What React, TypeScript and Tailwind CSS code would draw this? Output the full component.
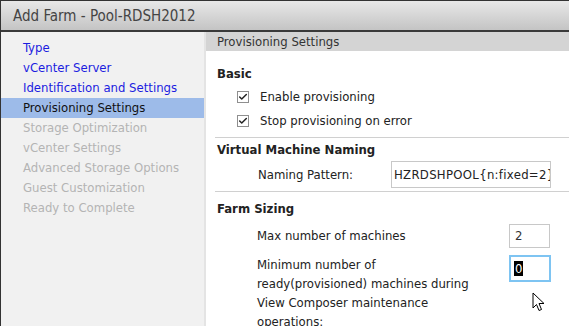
import { Check } from 'lucide-react'

const navItems = [
  { label: 'Type', state: 'link' },
  { label: 'vCenter Server', state: 'link' },
  { label: 'Identification and Settings', state: 'link' },
  { label: 'Provisioning Settings', state: 'active' },
  { label: 'Storage Optimization', state: 'disabled' },
  { label: 'vCenter Settings', state: 'disabled' },
  { label: 'Advanced Storage Options', state: 'disabled' },
  { label: 'Guest Customization', state: 'disabled' },
  { label: 'Ready to Complete', state: 'disabled' },
]

function CheckRow({ label }: { label: string }) {
  return (
    <label className="flex h-6 items-center gap-[11px] pl-[20px]">
      <span className="flex size-[12px] items-center justify-center border border-[#8f8f8f] bg-white">
        <Check className="size-[10px] text-[#222]" strokeWidth={3.5} />
      </span>
      <span>{label}</span>
    </label>
  )
}

export default function App() {
  return (
    <div className="flex h-[326px] w-[569px] flex-col overflow-hidden border-t border-l border-[#333] bg-white font-['DejaVu_Sans_Condensed','DejaVu_Sans',sans-serif] text-[13px] leading-[20px] text-[#222]">
      <div className="flex h-[31px] shrink-0 items-center border-b-2 border-[#3a3a3a] bg-gradient-to-b from-[#e8e8e8] to-[#c4c4c4] pl-3 text-[15px] text-[#444]">
        Add Farm - Pool-RDSH2012
      </div>
      <div className="flex min-h-0 flex-1">
        <nav className="flex w-[205px] shrink-0 flex-col border-r-2 border-[#e4e4e4] bg-[#f1f1f1] pt-[6px]">
          {navItems.map((item) => (
            <div
              key={item.label}
              className={
                item.state === 'active'
                  ? 'flex h-5 items-center bg-[#9dbbe9] pl-[22px] text-[#111]'
                  : item.state === 'link'
                    ? 'flex h-5 items-center pl-[22px] text-[#1c1ce0]'
                    : 'flex h-5 items-center pl-[22px] text-[#b4b4b4]'
              }
            >
              {item.label}
            </div>
          ))}
        </nav>
        <main className="flex min-w-0 flex-1 flex-col">
          <div className="flex h-[19px] shrink-0 items-center bg-[#d4d4d4] pl-[11px] text-[#333]">
            Provisioning Settings
          </div>
          <div className="pl-[9px]">
            <section className="border-b border-[#d0d0d0] pb-[4px] pl-[2px] pt-[13px]">
              <h3 className="mb-[1px] font-bold">Basic</h3>
              <CheckRow label="Enable provisioning" />
              <CheckRow label="Stop provisioning on error" />
            </section>
            <section className="border-b border-[#d0d0d0] pb-[3px] pl-[2px] pt-[2px]">
              <h3 className="font-bold">Virtual Machine Naming</h3>
              <div className="mt-[1px] flex items-center">
                <span className="w-[174px] pl-[41px]">Naming Pattern:</span>
                <div className="flex h-[27px] w-[160px] items-center overflow-hidden whitespace-nowrap border border-[#c8c8c8] pl-[2px] tracking-[0.3px]">
                  HZRDSHPOOL{'{'}n:fixed=2{'}'}
                </div>
              </div>
            </section>
            <section className="pl-[2px] pt-[7px]">
              <h3 className="font-bold">Farm Sizing</h3>
              <div className="mt-[5px] flex items-center">
                <span className="w-[292px] pl-[40px]">Max number of machines</span>
                <div className="flex h-[24px] w-[41px] items-center border border-[#c8c8c8] pl-[5px] text-[#333]">
                  2
                </div>
              </div>
              <div className="mt-[7px] flex items-start">
                <span className="w-[292px] pl-[40px] leading-[19px]">
                  Minimum number of
                  <br />
                  ready(provisioned) machines during
                  <br />
                  View Composer maintenance
                  <br />
                  operations:
                </span>
                <div className="relative flex h-[27px] w-[42px] items-center border-2 border-[#7ec4f2] pl-[3px]">
                  <span className="bg-black px-[1px] leading-[15px] text-white">0</span>
                  <svg
                    className="absolute left-[21px] top-[35px]"
                    width="13"
                    height="21"
                    viewBox="0 0 13 21"
                  >
                    <path
                      d="M1 1 L1 16 L4.5 12.5 L7 18.5 L9.5 17.5 L7 11.5 L12 11.5 Z"
                      fill="white"
                      stroke="black"
                      strokeWidth="1"
                      strokeLinejoin="miter"
                    />
                  </svg>
                </div>
              </div>
            </section>
          </div>
        </main>
      </div>
    </div>
  )
}
